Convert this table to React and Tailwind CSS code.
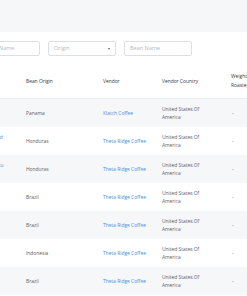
import React from 'react';

const rows = [
  { name: ['Geisha', 'Lot 4'], origin: 'Panama', vendor: 'Klatch Coffee' },
  { name: ['Natural Processed', 'Lot 12'], origin: 'Honduras', vendor: 'Theta Ridge Coffee' },
  { name: ['Honey Yellow Catu', 'ai Lot'], origin: 'Honduras', vendor: 'Theta Ridge Coffee' },
  { name: ['Yellow', 'Bourbon'], origin: 'Brazil', vendor: 'Theta Ridge Coffee' },
  { name: ['Cerrado', 'Natural'], origin: 'Brazil', vendor: 'Theta Ridge Coffee' },
  { name: ['Sumatra', 'Mandheling'], origin: 'Indonesia', vendor: 'Theta Ridge Coffee' },
  { name: ['Mogiana', 'Pulped'], origin: 'Brazil', vendor: 'Theta Ridge Coffee' },
];

const App = () => {
  return (
    <div className="w-[247px] h-[296px] overflow-hidden bg-white font-['Open_Sans',sans-serif] text-[4.9px]">
      <div className="h-[32px] bg-[#f6f7f9]"></div>

      <div className="flex gap-[8px] mt-[9px] -ml-[28px] text-[5.5px]">
        <div className="w-[68px] h-[15px] border border-[#dcdfe6] rounded-[2px] flex items-center px-[8px] text-[#b4b9c2]">
          Coffee Name
        </div>
        <div className="w-[68px] h-[15px] border border-[#dcdfe6] rounded-[2px] flex items-center justify-between px-[5px] text-[#b4b9c2]">
          <span>Origin</span>
          <span className="w-0 h-0 border-l-[1.5px] border-r-[1.5px] border-t-[2px] border-l-transparent border-r-transparent border-t-[#606266]"></span>
        </div>
        <div className="w-[68px] h-[15px] border border-[#dcdfe6] rounded-[2px] flex items-center px-[5px] text-[#b4b9c2]">
          Bean Name
        </div>
      </div>

      <div className="-ml-[39px]">
        <div className="flex items-center h-[35px] mt-[8px] border-b border-[#ebeef5] text-[#303a4a] font-medium leading-[9px]">
          <div className="w-[65px] shrink-0">Coffee</div>
          <div className="w-[77px] shrink-0">Bean Origin</div>
          <div className="w-[59px] shrink-0">Vendor</div>
          <div className="w-[69px] shrink-0">Vendor Country</div>
          <div className="w-[60px] shrink-0">
            <div>Weight</div>
            <div>Roasted</div>
          </div>
        </div>

        {rows.map((r, i) => (
          <div
            key={i}
            className={`flex items-center h-[28px] leading-[8px] ${i % 2 === 0 ? 'bg-[#f6f7f9]' : 'bg-white'}`}
          >
            <div className="w-[65px] shrink-0 text-[#4a8fd6]">
              <div>{r.name[0]}</div>
              <div>{r.name[1]}</div>
            </div>
            <div className="w-[77px] shrink-0 text-[#555e6b]">{r.origin}</div>
            <div className="w-[59px] shrink-0 text-[#4a8fd6]">{r.vendor}</div>
            <div className="w-[69px] shrink-0 text-[#555e6b]">
              <div>United States Of</div>
              <div>America</div>
            </div>
            <div className="w-[60px] shrink-0 text-[#555e6b] pl-[1px]">-</div>
          </div>
        ))}
      </div>
    </div>
  );
};

export default App;
